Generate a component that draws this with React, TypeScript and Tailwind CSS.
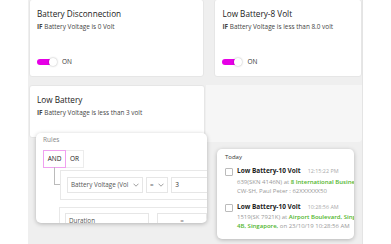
import React from 'react';

function Toggle() {
  return (
    <div className="flex items-center gap-[5px]">
      <div className="relative w-[20px] h-[8px]">
        <div className="absolute left-0 top-[1px] w-[17px] h-[6px] rounded-full bg-[#e600e6]"></div>
        <div className="absolute right-0 top-0 w-[8px] h-[8px] rounded-full bg-white shadow-[0_0_2px_rgba(0,0,0,0.35)]"></div>
      </div>
      <span className="text-[6.5px] text-[#333]">ON</span>
    </div>
  );
}

function RuleCard({ title, cond, toggle = true, className }: { title: string; cond: string; toggle?: boolean; className: string }) {
  return (
    <div className={`bg-white rounded-[3px] border border-[#e6e6e6] px-[7px] flex flex-col ${className}`}>
      <p className="text-[8.2px] text-[#222] leading-none mt-[10px]">{title}</p>
      <p className="text-[6.4px] text-[#444] leading-none mt-[6px]">
        <span className="font-bold">IF</span> {cond}
      </p>
      {toggle && (
        <div className="mt-auto mb-[9px]">
          <Toggle />
        </div>
      )}
    </div>
  );
}

function Chevron() {
  return (
    <svg width="6" height="4" viewBox="0 0 6 4" fill="none" stroke="#777" strokeWidth="0.7">
      <path d="M0.5 0.7 L3 3.2 L5.5 0.7" />
    </svg>
  );
}

const alerts = [
  {
    time: '12:15:22 PM',
    pre: '639(SKN 4146N) at ',
    place: '8 International Business Park',
    line3: <span>CW-SH, Paul Peter : 62XXXXXX50</span>,
  },
  {
    time: '10:28:56 AM',
    pre: '1519(SK 7921K) at ',
    place: 'Airport Boulevard, Singapore',
    line3: (
      <span>
        <span className="text-[#4fb52b] font-semibold">4B, Singapore,</span> on 23/10/19 10:28:56 AM
      </span>
    ),
  },
  {
    time: '10:12:40 AM',
    pre: '1519(SK 7921K) at ',
    place: 'Airport Boulevard',
    line3: <span></span>,
  },
];

export default function App() {
  return (
    <div className="relative w-[391px] h-[244px] bg-white flex overflow-hidden" style={{ fontFamily: '"Open Sans", sans-serif' }}>
      <div className="w-[28px] shrink-0"></div>
      <div className="w-[335px] h-full bg-[#efefef] flex flex-col gap-[8px] border-r border-[#e4e4e4]">
        <div className="flex gap-[10px] pl-[1px] -mt-[1px]">
          <RuleCard title="Battery Disconnection" cond="Battery Voltage is 0 Volt" className="w-[176px] h-[78px]" />
          <RuleCard title="Low Battery-8 Volt" cond="Battery Voltage is less than 8.0 volt" className="w-[148px] h-[78px]" />
        </div>
        <div className="flex items-start gap-[1px] pl-[1px]">
          <RuleCard title="Low Battery" cond="Battery Voltage is less than 3 volt" toggle={false} className="w-[176px] h-[53px]" />
          <div className="w-[157px] h-[57px] bg-[#f6f6f6] rounded-br-[4px]"></div>
        </div>
      </div>

      {/* Rules editor popup */}
      <div className="absolute left-[36px] top-[133px] w-[171px] h-[90px] bg-white rounded-[5px] shadow-[0_1px_4px_rgba(0,0,0,0.25)] overflow-hidden">
        <p className="text-[6.5px] text-[#888] leading-none mt-[4px] ml-[7px]">Rules</p>
        <div className="flex ml-[7px] mt-[6px]">
          <div className="w-[23px] h-[18px] border border-[#f0a0f0] flex items-center justify-center text-[6.5px] text-[#222]">AND</div>
          <div className="w-[18px] h-[18px] border border-[#ececec] border-l-0 flex items-center justify-center text-[6.5px] text-[#222]">OR</div>
        </div>
        <div className="absolute left-[18px] top-[34px] w-[6px] h-[18px] border-l border-b border-[#bbb]"></div>
        <div className="ml-[24px] mt-[2px] h-[30px] border border-[#e8e8e8] flex items-center gap-[3px] pl-[6px] w-[160px]">
          <div className="w-[80px] h-[16px] border border-[#e6e6e6] flex items-center justify-between px-[3px] text-[6.3px] text-[#555] overflow-hidden whitespace-nowrap">
            <span>Battery Voltage (Vol</span>
            <Chevron />
          </div>
          <div className="w-[23px] h-[16px] border border-[#e6e6e6] flex items-center justify-between px-[3px] text-[6.3px] text-[#666]">
            <span>=</span>
            <Chevron />
          </div>
          <div className="w-[50px] h-[16px] border border-[#e6e6e6] flex items-center px-[3px] text-[6.5px] text-[#333]">3</div>
        </div>
        <div className="ml-[23px] mt-[7px] h-[30px] border border-[#e8e8e8] flex items-start gap-[8px] pl-[5px] pt-[5px] w-[160px]">
          <div className="w-[84px] h-[16px] border border-[#e6e6e6] flex items-center px-[3px] text-[6.3px] text-[#555]">Duration</div>
          <div className="w-[50px] h-[16px] border border-[#e6e6e6] flex items-center justify-center text-[6.3px] text-[#777]">=</div>
        </div>
      </div>

      {/* Notifications popup */}
      <div className="absolute left-[217px] top-[149px] w-[137px] h-[90px] bg-white rounded-[5px] shadow-[0_1px_4px_rgba(0,0,0,0.25)] overflow-hidden px-[8px]">
        <p className="text-[6px] text-[#333] leading-none mt-[5px]">Today</p>
        <div className="flex flex-col gap-[8px] mt-[8px]">
          {alerts.map((a, i) => (
            <div key={i} className="flex gap-[4px]">
              <div className="w-[8px] h-[8px] border border-[#bbb] rounded-[1px] shrink-0"></div>
              <div className="flex flex-col whitespace-nowrap">
                <div className="flex items-baseline gap-[7px] leading-none">
                  <span className="text-[6.5px] font-bold text-[#222]">Low Battery-10 Volt</span>
                  <span className="text-[5.4px] text-[#aaa]">{a.time}</span>
                </div>
                <p className="text-[6px] text-[#999] leading-[9px] mt-[3px]">
                  {a.pre}
                  <span className="text-[#4fb52b] font-semibold">{a.place}</span>
                </p>
                <p className="text-[6px] text-[#999] leading-[9px]">{a.line3}</p>
              </div>
            </div>
          ))}
        </div>
      </div>
    </div>
  );
}
